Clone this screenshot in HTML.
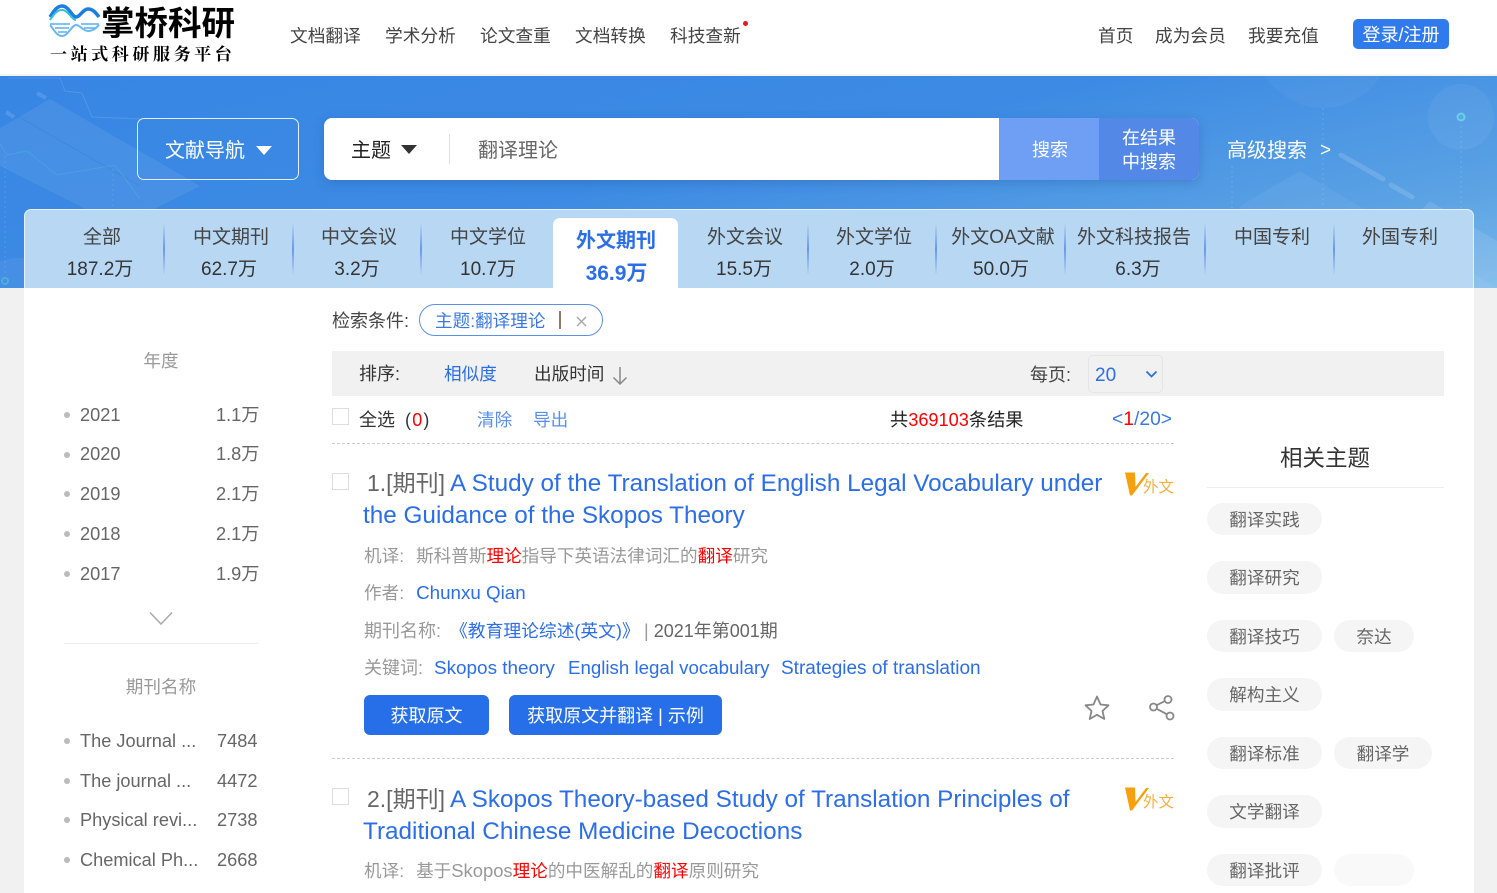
<!DOCTYPE html>
<html lang="zh"><head><meta charset="utf-8"><title>掌桥科研</title>
<style>
*{box-sizing:border-box}
html,body{margin:0;padding:0}
body{width:1497px;height:893px;position:relative;overflow:hidden;background:#f1f1f1;font-family:"Liberation Sans","Noto Sans CJK SC",sans-serif;color:#333}
.t{position:absolute;white-space:nowrap;line-height:24px;height:24px;margin-top:1px}
.c{transform:translateX(-50%)}
.b{color:#2b6ee8}.g{color:#999}.d{color:#666}.r{color:#f00}
.box{position:absolute}
.nav{font-size:17.7px;color:#444;top:23px}
.tab{font-size:19px;color:#444}
.num{font-size:19px;color:#333}
.sep{position:absolute;top:224px;width:2px;height:50px;background:linear-gradient(#b5d3f3,#6a97f0 50%,#b5d3f3)}
.dot{position:absolute;width:6px;height:6px;border-radius:50%;background:#bbb}
.sd{font-size:18.2px;color:#666;margin-top:0}
.pill{position:absolute;height:32px;border-radius:16px;background:#f5f5f5;color:#666;font-size:17.6px;line-height:34px;text-align:center}
.cb{position:absolute;width:17px;height:17px;border:1px solid #ddd;background:#fff}
.dash{position:absolute;height:0;border-top:1px dashed #ccc}
.ti{font-size:24.3px;color:#2b6ee8;line-height:32px;height:32px}
.m{font-size:17.6px}
.btn{position:absolute;top:695px;height:40px;border-radius:6px;background:#266fe8;color:#fff;font-size:18px;line-height:42px;text-align:center}
</style></head><body>
<div class="box" style="left:0;top:0;width:1497px;height:74px;background:#fff"></div>
<div class="box" style="left:0;top:74px;width:1497px;height:2px;background:#f5f5f5"></div>

<svg class="box" style="left:48px;top:3px" width="54" height="38" viewBox="0 0 54 38" fill="none">
<path d="M2 14C6 8 9 3 14 3C21 3 24 14 28 14C32 14 35 6 40 6C45 6 48 10 51 14" stroke="#1a7fe0" stroke-width="3.500"/>
<path d="M2 17C6 11 9 7 14 7C20 7 24 17 28 17" stroke="#35c0d8" stroke-width="2"/>
<path d="M2 22C6 27 9 33 14 33C20 33 24 22 28 22C32 22 35 28 40 28C45 28 48 25 51 22" stroke="#6ab8f0" stroke-width="2"/>
<path d="M2 21H22M33 21H51M7 25H21M36 25H47M10 29H19" stroke="#58aef0" stroke-width="1.500"/>
</svg>
<div class="t" style="left:101px;top:5px;height:38px;line-height:38px;font-size:33.5px;font-weight:700;color:#000">掌桥科研</div>
<div class="t" style="left:50px;top:42px;font-size:17px;font-weight:700;color:#000;font-family:'Liberation Serif','Noto Serif CJK SC',serif;letter-spacing:3.6px">一站式科研服务平台</div>

<div class="t nav" style="left:290px">文档翻译</div>
<div class="t nav" style="left:385px">学术分析</div>
<div class="t nav" style="left:480px">论文查重</div>
<div class="t nav" style="left:575px">文档转换</div>
<div class="t nav" style="left:670px">科技查新</div>
<div class="dot" style="left:743px;top:21px;width:5px;height:5px;background:#e8171f"></div>
<div class="t nav" style="left:1098px">首页</div>
<div class="t nav" style="left:1155px">成为会员</div>
<div class="t nav" style="left:1248px">我要充值</div>
<div class="box" style="left:1353px;top:19px;width:96px;height:30px;border-radius:5px;background:#2f7bee;color:#fff;font-size:18px;line-height:32px;text-align:center">登录/注册</div>

<div class="box" style="left:0;top:76px;width:1497px;height:212px;background:linear-gradient(168deg,#3786e4 0%,#3c8ae3 45%,#5ba2e4 80%,#7ab8ea 100%);overflow:hidden">
<svg width="1497" height="212" style="position:absolute;left:0;top:0" fill="none">
<path d="M0 52L50 23 200 110 120 150 0 90Z" fill="#fff" opacity=".07"/>
<path d="M17 40L140 110" stroke="#2a6ec8" stroke-width="1" opacity=".2"/>
<path d="M0 68L7 79 27 75 57 99 115 89 140 123" stroke="#4fc0dc" stroke-width="1" opacity=".35"/>
<path d="M8 2H60L65 15 82 17 92 41 140 43" stroke="#fff" stroke-width="1" opacity=".12"/>
<path d="M37 17l9 5M6 36l8 5" stroke="#fff" stroke-width="4" opacity=".13"/>
<path d="M5 80V200M113 93V132" stroke="#fff" stroke-dasharray="2 3" opacity=".12"/>
<path d="M0 185C30 175 60 190 90 212H0Z" fill="#fff" opacity=".06"/>
<circle cx="5" cy="205" r="3" stroke="#56c0d8" stroke-width="2" opacity=".6"/>
<circle cx="1323" cy="-36" r="68" fill="#fff" opacity=".04"/>
<circle cx="1461" cy="41" r="33" fill="#fff" opacity=".05"/>
<circle cx="1461" cy="41" r="3.500" fill="#3cb8d8" stroke="#7cc4ee" stroke-width="2"/>
<path d="M1323 32V132M1461 50V132M1232 90V132" stroke="#fff" stroke-dasharray="2 3" opacity=".14"/>
<path d="M1341 79l42 24M1391 109l21 12" stroke="#fff" stroke-width="5" opacity=".14" stroke-linecap="round"/>
<path d="M1240 130L1300 95 1497 212H1240Z" fill="#fff" opacity=".05"/>
<path d="M1430 125L1497 165V212H1350Z" fill="#fff" opacity=".1"/>
</svg>
</div>
<div class="box" style="left:137px;top:118px;width:162px;height:62px;border:1px solid #e4effb;border-radius:7px"></div>
<div class="t" style="left:165px;top:138px;font-size:20px;color:#fff">文献导航</div>
<div class="box" style="left:256px;top:146px;border-left:8px solid transparent;border-right:8px solid transparent;border-top:9px solid #fff"></div>

<div class="box" style="left:324px;top:118px;width:875px;height:62px;border-radius:8px;background:#fff;box-shadow:0 3px 10px rgba(30,70,140,.25);overflow:hidden">
<div class="box" style="left:675px;top:0;width:100px;height:62px;background:#6f9ff4"></div>
<div class="box" style="left:775px;top:0;width:100px;height:62px;background:#5488e6"></div>
</div>
<div class="t" style="left:351px;top:138px;font-size:20px;color:#222">主题</div>
<div class="box" style="left:401px;top:145px;border-left:8px solid transparent;border-right:8px solid transparent;border-top:9px solid #333"></div>
<div class="box" style="left:449px;top:134px;width:1px;height:30px;background:#ddd"></div>
<div class="t" style="left:478px;top:138px;font-size:20px;color:#666">翻译理论</div>
<div class="t" style="left:1032px;top:137px;font-size:18px;color:#fff">搜索</div>
<div class="t" style="left:1122px;top:125px;font-size:18px;color:#fff">在结果</div>
<div class="t" style="left:1122px;top:149px;font-size:18px;color:#fff">中搜索</div>
<div class="t" style="left:1227px;top:138px;font-size:20px;color:#fff">高级搜索</div>
<div class="t" style="left:1320px;top:138px;font-size:19px;color:#fff">&gt;</div>

<div class="box" style="left:24px;top:288px;width:1450px;height:605px;background:#fff"></div>
<div class="box" style="left:24px;top:209px;width:1450px;height:79px;background:#b7d7f3;border:1px solid #e6f1fb;border-bottom:0;border-radius:7px 7px 0 0"></div>
<div class="box" style="left:553px;top:218px;width:125px;height:70px;background:#fff;border-radius:7px 7px 0 0"></div>
<div class="sep" style="left:163px"></div><div class="sep" style="left:292px"></div><div class="sep" style="left:420px"></div><div class="sep" style="left:807px"></div><div class="sep" style="left:935px"></div><div class="sep" style="left:1064px"></div><div class="sep" style="left:1204px"></div><div class="sep" style="left:1333px"></div>

<div class="t tab c" style="left:102px;top:225px">全部</div><div class="t num c" style="left:100px;top:257px">187.2万</div>
<div class="t tab c" style="left:231px;top:225px">中文期刊</div><div class="t num c" style="left:229px;top:257px">62.7万</div>
<div class="t tab c" style="left:359px;top:225px">中文会议</div><div class="t num c" style="left:357px;top:257px">3.2万</div>
<div class="t tab c" style="left:488px;top:225px">中文学位</div><div class="t num c" style="left:488px;top:257px">10.7万</div>
<div class="t c" style="left:616px;top:228px;font-size:20px;font-weight:700;color:#2b6ee8">外文期刊</div><div class="t c" style="left:616.5px;top:261px;font-size:21px;font-weight:700;color:#2b6ee8">36.9万</div>
<div class="t tab c" style="left:745px;top:225px">外文会议</div><div class="t num c" style="left:744px;top:257px">15.5万</div>
<div class="t tab c" style="left:874px;top:225px">外文学位</div><div class="t num c" style="left:872px;top:257px">2.0万</div>
<div class="t tab c" style="left:1003px;top:225px">外文OA文献</div><div class="t num c" style="left:1001px;top:257px">50.0万</div>
<div class="t tab c" style="left:1134px;top:225px">外文科技报告</div><div class="t num c" style="left:1138px;top:257px">6.3万</div>
<div class="t tab c" style="left:1272px;top:225px">中国专利</div>
<div class="t tab c" style="left:1400px;top:225px">外国专利</div>

<div class="t c" style="left:161px;top:348px;font-size:17.6px;color:#999">年度</div>
<div class="dot" style="left:64px;top:412px"></div><div class="t sd" style="left:80px;top:403px">2021</div><div class="t sd" style="left:216px;top:403px">1.1万</div>
<div class="dot" style="left:64px;top:452px"></div><div class="t sd" style="left:80px;top:442px">2020</div><div class="t sd" style="left:216px;top:442px">1.8万</div>
<div class="dot" style="left:64px;top:491px"></div><div class="t sd" style="left:80px;top:482px">2019</div><div class="t sd" style="left:216px;top:482px">2.1万</div>
<div class="dot" style="left:64px;top:531px"></div><div class="t sd" style="left:80px;top:522px">2018</div><div class="t sd" style="left:216px;top:522px">2.1万</div>
<div class="dot" style="left:64px;top:571px"></div><div class="t sd" style="left:80px;top:562px">2017</div><div class="t sd" style="left:216px;top:562px">1.9万</div>
<svg class="box" style="left:148px;top:611px" width="26" height="16" fill="none"><path d="M2 1.500L13 13 24 1.500" stroke="#aaa" stroke-width="1.600"/></svg>
<div class="box" style="left:64px;top:643px;width:194px;height:1px;background:#eee"></div>
<div class="t c" style="left:161px;top:674px;font-size:17.6px;color:#999">期刊名称</div>
<div class="dot" style="left:64px;top:738px"></div><div class="t sd" style="left:80px;top:729px">The Journal ...</div><div class="t sd" style="left:217px;top:729px">7484</div>
<div class="dot" style="left:64px;top:778px"></div><div class="t sd" style="left:80px;top:769px">The journal ...</div><div class="t sd" style="left:217px;top:769px">4472</div>
<div class="dot" style="left:64px;top:817px"></div><div class="t sd" style="left:80px;top:808px">Physical revi...</div><div class="t sd" style="left:217px;top:808px">2738</div>
<div class="dot" style="left:64px;top:857px"></div><div class="t sd" style="left:80px;top:848px">Chemical Ph...</div><div class="t sd" style="left:217px;top:848px">2668</div>

<div class="t" style="left:332px;top:308px;font-size:18px;color:#444">检索条件:</div>
<div class="box" style="left:419px;top:304px;width:184px;height:32px;border:1px solid #5c8fe6;border-radius:16px"></div>
<div class="t" style="left:435px;top:308px;font-size:17.6px;color:#3a78e8">主题:翻译理论</div>
<div class="box" style="left:559px;top:311px;width:2px;height:18px;background:#8a7a66"></div>
<svg class="box" style="left:576px;top:316px" width="11" height="11" fill="none"><path d="M1 1l9 9M10 1l-9 9" stroke="#aaa" stroke-width="1.500"/></svg>

<div class="box" style="left:332px;top:351px;width:1112px;height:45px;background:#f1f1f1"></div>
<div class="t" style="left:359px;top:361px;font-size:18px;color:#333">排序:</div>
<div class="t b" style="left:444px;top:361px;font-size:17.6px">相似度</div>
<div class="t" style="left:534px;top:361px;font-size:17.6px;color:#333">出版时间</div>
<svg class="box" style="left:611px;top:366px" width="18" height="20" fill="none"><path d="M9 1V18M2.500 11.500L9 18l6.500-6.500" stroke="#888" stroke-width="1.500"/></svg>
<div class="t" style="left:1030px;top:362px;font-size:18px;color:#444">每页:</div>
<div class="box" style="left:1088px;top:355px;width:75px;height:38px;border:1px solid #e5e5e5;border-radius:5px"></div>
<div class="t" style="left:1095px;top:363px;font-size:19px;color:#2b6ee8">20</div>
<svg class="box" style="left:1145px;top:370px" width="13" height="9" fill="none"><path d="M1.500 1.500L6.500 6.500 11.500 1.500" stroke="#2b6ee8" stroke-width="1.800"/></svg>

<div class="cb" style="left:332px;top:408px"></div>
<div class="t" style="left:359px;top:407px;font-size:18px;color:#333">全选</div>
<div class="t" style="left:405px;top:407px;font-size:18px;color:#333;letter-spacing:1.2px">(<span class="r">0</span>)</div>
<div class="t" style="left:477px;top:407px;font-size:17.6px;color:#5a8fee">清除</div>
<div class="t" style="left:533px;top:407px;font-size:17.6px;color:#5a8fee">导出</div>
<div class="t" style="left:890px;top:407px;font-size:18.2px;color:#222">共<span class="r">369103</span>条结果</div>
<div class="t" style="left:1112px;top:407px;font-size:19.3px;color:#3a78e8">&lt;<span class="r">1</span>/20&gt;</div>
<div class="dash" style="left:332px;top:443px;width:842px"></div>

<div class="cb" style="left:332px;top:473px"></div>
<div class="t ti" style="left:367px;top:466px;font-size:23px;color:#666">1.[期刊]</div>
<div class="t ti" style="left:450px;top:467px">A Study of the Translation of English Legal Vocabulary under</div>
<div class="t ti" style="left:363px;top:499px">the Guidance of the Skopos Theory</div>
<svg class="box" style="left:1124px;top:471px" width="26" height="26"><path d="M1 1.500H11L11.500 16 22 2H25L8 24.500H6Z" fill="#f5a00c"/></svg>
<div class="t" style="left:1143px;top:475px;font-size:15.5px;color:#f5b040">外文</div>
<div class="t m g" style="left:364px;top:543px">机译:<span style="margin-left:12px">斯科普斯</span><span class="r">理论</span>指导下英语法律词汇的<span class="r">翻译</span>研究</div>
<div class="t m g" style="left:364px;top:580px">作者:<span class="b" style="font-size:18.8px;margin-left:12px">Chunxu Qian</span></div>
<div class="t m g" style="left:364px;top:618px;font-size:18px">期刊名称:</div>
<div class="t b" style="left:450px;top:618px;font-size:17.8px">《教育理论综述(英文)》</div>
<div class="t" style="left:644px;top:618px;font-size:18px;color:#666"><span class="g">|</span> 2021年第001期</div>
<div class="t m g" style="left:364px;top:655px;font-size:18px">关键词:</div>
<div class="t b" style="left:434px;top:656px;font-size:18.9px">Skopos theory</div>
<div class="t b" style="left:568px;top:655px;font-size:18.7px">English legal vocabulary</div>
<div class="t b" style="left:781px;top:656px;font-size:19px">Strategies of translation</div>
<div class="btn" style="left:364px;width:125px">获取原文</div>
<div class="btn" style="left:509px;width:213px">获取原文并翻译 | 示例</div>
<svg class="box" style="left:1082px;top:693px" width="30" height="30" fill="none"><path d="M15 3.500L18.500 11.500 26.500 12.300 20.500 18 22.300 26 15 21.800 7.700 26 9.500 18 3.500 12.300 11.500 11.500Z" stroke="#888" stroke-width="1.800" stroke-linejoin="round"/></svg>
<svg class="box" style="left:1147px;top:693px" width="30" height="30" fill="none" stroke="#888" stroke-width="1.800"><circle cx="21" cy="6.500" r="3.500"/><circle cx="6.500" cy="14" r="3.500"/><circle cx="23" cy="23" r="3.500"/><path d="M9.500 12.300L18 8M9.700 15.800L20 21.300"/></svg>
<div class="dash" style="left:332px;top:758px;width:842px"></div>

<div class="cb" style="left:332px;top:788px"></div>
<div class="t ti" style="left:367px;top:782px;font-size:23px;color:#666">2.[期刊]</div>
<div class="t ti" style="left:450px;top:783px">A Skopos Theory-based Study of Translation Principles of</div>
<div class="t ti" style="left:363px;top:815px">Traditional Chinese Medicine Decoctions</div>
<svg class="box" style="left:1124px;top:786px" width="26" height="26"><path d="M1 1.500H11L11.500 16 22 2H25L8 24.500H6Z" fill="#f5a00c"/></svg>
<div class="t" style="left:1143px;top:790px;font-size:15.5px;color:#f5b040">外文</div>
<div class="t m g" style="left:364px;top:858px">机译:<span style="margin-left:12px">基于</span><span style="font-size:18.4px">Skopos</span><span class="r">理论</span>的中医解乱的<span class="r">翻译</span>原则研究</div>

<div class="t c" style="left:1325px;top:446px;font-size:22.5px;color:#333">相关主题</div>
<div class="box" style="left:1207px;top:487px;width:237px;height:1px;background:#eee"></div>
<div class="pill" style="left:1207px;top:503px;width:115px">翻译实践</div>
<div class="pill" style="left:1207px;top:561px;width:115px;height:33px">翻译研究</div>
<div class="pill" style="left:1207px;top:620px;width:115px">翻译技巧</div>
<div class="pill" style="left:1334px;top:620px;width:80px">奈达</div>
<div class="pill" style="left:1207px;top:678px;width:115px;height:33px">解构主义</div>
<div class="pill" style="left:1207px;top:737px;width:115px">翻译标准</div>
<div class="pill" style="left:1334px;top:737px;width:98px">翻译学</div>
<div class="pill" style="left:1207px;top:795px;width:115px;height:33px">文学翻译</div>
<div class="pill" style="left:1207px;top:854px;width:115px">翻译批评</div>
<div class="pill" style="left:1334px;top:854px;width:80px;background:#f9f9f9"></div>
</body></html>
